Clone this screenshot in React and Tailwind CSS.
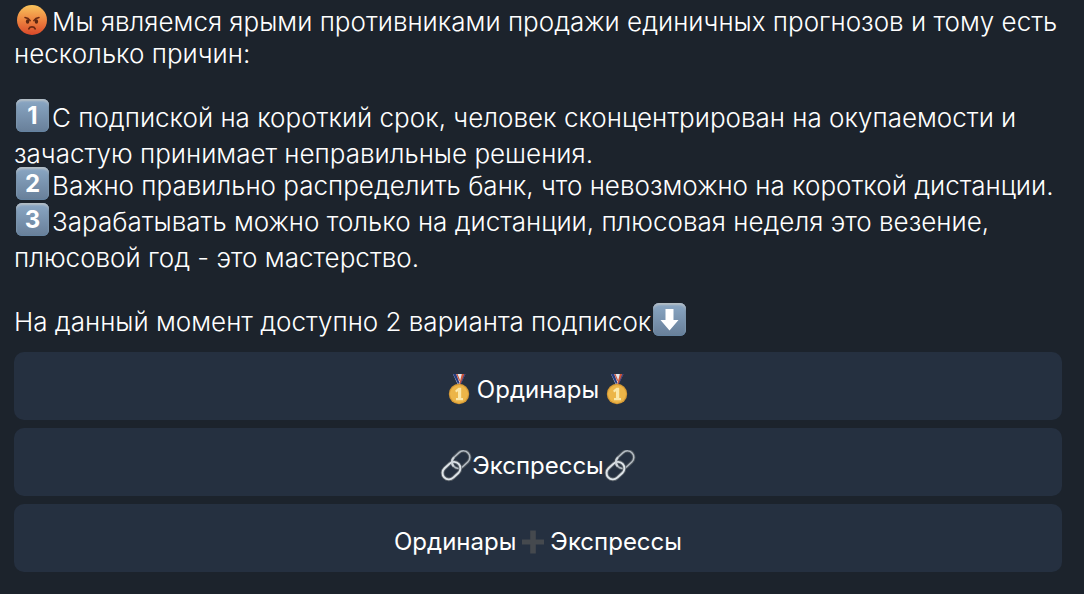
const AngryFace = () => (
    <svg viewBox="0 0 32 32" className="inline-block align-[3px] w-8 h-8 -my-2 ml-0.5 mr-1" aria-hidden="true">
        <defs>
            <linearGradient id="face" x1="0" y1="0" x2="0" y2="1">
                <stop offset="0" stopColor="#f8c35c" />
                <stop offset="0.5" stopColor="#ee8540" />
                <stop offset="1" stopColor="#d9482a" />
            </linearGradient>
        </defs>
        <circle cx="16" cy="16" r="15" fill="url(#face)" />
        <path d="M9 13.600c2.300.3 4 1.200 5.200 3M23 13.600c-2.300.3-4 1.200-5.200 3" fill="none" stroke="#6b2a12" strokeWidth="1.500" strokeLinecap="round" />
        <ellipse cx="11.600" cy="17.500" rx="1.700" ry="2.300" fill="#5c2612" />
        <ellipse cx="20.400" cy="17.500" rx="1.700" ry="2.300" fill="#5c2612" />
        <path d="M12.800 24.800c1.200-2.600 5.200-2.600 6.400 0" fill="none" stroke="#6b2a12" strokeWidth="1.700" strokeLinecap="round" />
    </svg>
);

const tileClass =
    'inline-block overflow-hidden align-[3px] w-[33px] h-[33px] -my-2 ml-0.5 rounded-md bg-linear-to-b from-[#8ba8c5] to-[#687f99] shadow-[inset_0_2px_2px_#b6bfc7,inset_0_0_1px_1px_#6483a1] text-center text-2xl leading-[34px] font-bold';

const Keycap = ({ children }) => <span className={`${tileClass} mr-[3px]`}>{children}</span>;

const ArrowTile = () => (
    <span className={tileClass}>
        <svg viewBox="0 0 33 33" className="block w-full h-full" aria-hidden="true">
            <path d="M12.500 6h8v11h5L16.500 27.500 7.500 17h5z" fill="#fff" />
        </svg>
    </span>
);

const Medal = () => (
    <svg viewBox="0 0 30 32" className="w-[30px] h-8 shrink-0" aria-hidden="true">
        <path d="M9 0h12l-4.500 10h-3z" fill="#e4e8ee" />
        <path d="M9 0h3.200l3.300 9-1.500 1z" fill="#263c80" />
        <path d="M12.200 0h1.300l2.500 6-.6 1.500z" fill="#cf5538" />
        <path d="M17.800 0h3.700l-4.700 10h-1.500z" fill="#cf5538" />
        <path d="M20.300 0h1.200l-4.500 10h-.6z" fill="#2d4488" />
        <circle cx="15" cy="20" r="10.200" fill="#d79a35" />
        <circle cx="15" cy="20" r="9" fill="#ecb548" />
        <path d="M11.200 16.500l3.300-2.800h2.700v10.300h1.800v2.300h-7v-2.300h2v-6.800l-2 1.300z" fill="#fbe7a8" />
    </svg>
);

const Chain = () => (
    <svg viewBox="1 2 30 30" className="w-8 h-8 shrink-0" aria-hidden="true">
        <g fill="none" transform="rotate(-43 16 16)">
            <rect x="13.500" y="9.500" width="18.500" height="12" rx="6" stroke="#4d545b" strokeWidth="3.200" />
            <rect x="13.500" y="9.500" width="18.500" height="12" rx="6" stroke="#b5bdc5" strokeWidth="1.400" />
            <rect x="0" y="11" width="18.500" height="12" rx="6" stroke="#5d646b" strokeWidth="3.400" />
            <rect x="0" y="11" width="18.500" height="12" rx="6" stroke="#dfe5ea" strokeWidth="1.800" />
            <path d="M13.500 15.500a6 6 0 0 1 6-6" stroke="#d0d6dc" strokeWidth="2" />
        </g>
    </svg>
);

const Plus = () => (
    <svg viewBox="0 0 24 24" className="w-6 h-6 mx-[5px] shrink-0" aria-hidden="true">
        <path d="M9.200 .500h5.600v9H23v5h-8.200v9H9.200v-9H1v-5h8.200z" fill="#45494e" />
    </svg>
);

const MenuButton = ({ children }) => (
    <button
        type="button"
        className="flex items-center justify-center w-full h-[68px] pt-2 rounded-[10px] bg-[#253040] hover:bg-[#2c394b] text-2xl font-[380] whitespace-nowrap"
    >
        {children}
    </button>
);

const App = () => {
    return (
        <main className="min-h-screen bg-[#1c232c] text-white font-['Inter','Liberation_Sans',sans-serif] pl-3.5 pr-[22px] pt-1.5 pb-5">
            <div className="text-[26px] font-[350] whitespace-nowrap">
                <p className="leading-8">
                    <AngryFace />Мы являемся ярыми противниками продажи единичных прогнозов и тому есть
                    <br />
                    несколько причин:
                </p>
                <div className="mt-[30px]">
                    <p className="leading-9">
                        <Keycap>1</Keycap>С подпиской на короткий срок, человек сконцентрирован на окупаемости и
                        <br />
                        зачастую принимает неправильные решения.
                    </p>
                    <p className="leading-7 mb-1">
                        <Keycap>2</Keycap>Важно правильно распределить банк, что невозможно на короткой дистанции.
                    </p>
                    <p className="leading-9">
                        <Keycap>3</Keycap>Зарабатывать можно только на дистанции, плюсовая неделя это везение,
                        <br />
                        плюсовой год - это мастерство.
                    </p>
                </div>
                <p className="mt-[30px] leading-8">
                    На данный момент доступно 2 варианта подписок
                    <ArrowTile />
                </p>
            </div>

            <div className="mt-3.5 flex flex-col gap-2">
                <MenuButton>
                    <Medal />
                    <span className="mx-[3px]">Ординары</span>
                    <Medal />
                </MenuButton>
                <MenuButton>
                    <Chain />
                    <span>Экспрессы</span>
                    <Chain />
                </MenuButton>
                <MenuButton>
                    <span>Ординары</span>
                    <Plus />
                    <span>Экспрессы</span>
                </MenuButton>
            </div>
        </main>
    );
};

export default App;
